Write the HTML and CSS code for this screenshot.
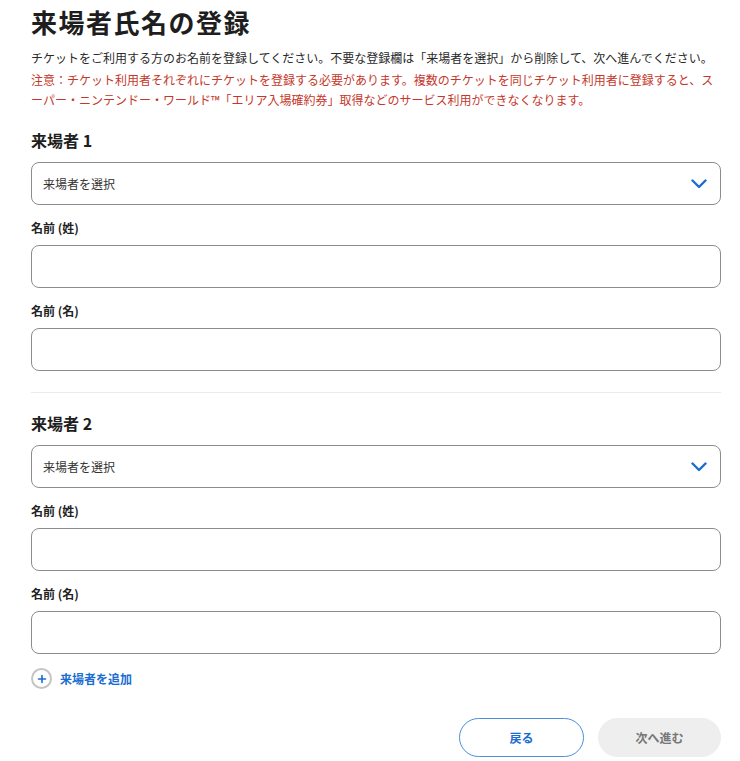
FILE: index.html
```html
<!DOCTYPE html>
<html lang="ja">
<head>
<meta charset="utf-8">
<title>来場者氏名の登録</title>
<link rel="stylesheet" href="styles.css">
</head>
<body>
<main class="page">
  <h1 class="title">来場者氏名の登録</h1>
  <p class="lead">チケットをご利用する方のお名前を登録してください。不要な登録欄は「来場者を選択」から削除して、次へ進んでください。</p>
  <p class="notice">注意：チケット利用者それぞれにチケットを登録する必要があります。複数のチケットを同じチケット利用者に登録すると、スーパー・ニンテンドー・ワールド™「エリア入場確約券」取得などのサービス利用ができなくなります。</p>

  <section class="visitor">
    <h2 class="visitor-title">来場者 1</h2>
    <div class="select">
      <span class="select-text">来場者を選択</span>
      <svg class="chevron" width="16" height="10" viewBox="0 0 16 10"><path d="M1.5 1.5 L8 8 L14.5 1.5" fill="none" stroke="#1a6dd0" stroke-width="2.4" stroke-linecap="round" stroke-linejoin="round"/></svg>
    </div>
    <div class="field">
      <label class="label">名前 (姓)</label>
      <div class="input"></div>
    </div>
    <div class="field">
      <label class="label">名前 (名)</label>
      <div class="input"></div>
    </div>
  </section>

  <hr class="divider">

  <section class="visitor">
    <h2 class="visitor-title">来場者 2</h2>
    <div class="select">
      <span class="select-text">来場者を選択</span>
      <svg class="chevron" width="16" height="10" viewBox="0 0 16 10"><path d="M1.5 1.5 L8 8 L14.5 1.5" fill="none" stroke="#1a6dd0" stroke-width="2.4" stroke-linecap="round" stroke-linejoin="round"/></svg>
    </div>
    <div class="field">
      <label class="label">名前 (姓)</label>
      <div class="input"></div>
    </div>
    <div class="field">
      <label class="label">名前 (名)</label>
      <div class="input"></div>
    </div>
  </section>

  <div class="add">
    <span class="add-icon">
      <svg width="10" height="10" viewBox="0 0 10 10"><path d="M5 1.5 V8.5 M1.5 5 H8.5" stroke="#1a6dd0" stroke-width="1.6" stroke-linecap="round"/></svg>
    </span>
    <span class="add-text">来場者を追加</span>
  </div>

  <div class="actions">
    <button class="btn btn-back">戻る</button>
    <button class="btn btn-next">次へ進む</button>
  </div>
</main>
</body>
</html>
```

FILE: styles.css
```css
* { box-sizing: border-box; }
html, body { margin: 0; padding: 0; background: #fff; }
body {
  font-family: "Noto Sans CJK JP", "Noto Sans", sans-serif;
  color: #222;
}
.page {
  padding: 4px 19px 0 31px;
  width: 740px;
}
.title {
  margin: 0;
  font-size: 26px;
  line-height: 36px;
  font-weight: 700;
  letter-spacing: 1.5px;
  color: #1e1e1e;
}
.lead, .notice {
  margin: 0;
  font-size: 12px;
  line-height: 20px;
  letter-spacing: 0;
}
.lead { margin-top: 8px; color: #2a2a2a; }
.notice { margin-top: 2px; color: #c5372b; }
.visitor-title {
  margin: 0 0 10px;
  font-size: 16px;
  line-height: 24px;
  font-weight: 700;
  color: #1e1e1e;
}
.notice + .visitor { margin-top: 18px; }
.select {
  height: 43px;
  border: 1px solid #8c8c8c;
  border-radius: 8px;
  display: flex;
  align-items: center;
  justify-content: space-between;
  padding: 0 13px 0 11px;
}
.select-text { font-size: 12px; color: #333; }
.chevron { display: block; }
.field { margin-top: 14px; display: flex; flex-direction: column; }
.label {
  font-size: 12px;
  line-height: 18px;
  font-weight: 700;
  color: #222;
  margin-bottom: 8px;
}
.input {
  height: 43px;
  border: 1px solid #8c8c8c;
  border-radius: 8px;
}
.divider {
  margin: 21px 0 18px;
  border: 0;
  border-top: 1px solid #ebebeb;
  height: 0;
}
.add {
  margin-top: 14px;
  display: flex;
  align-items: center;
  gap: 8px;
}
.add-icon {
  width: 21px;
  height: 21px;
  border: 2px solid #c4c4c4;
  border-radius: 50%;
  display: flex;
  align-items: center;
  justify-content: center;
}
.add-icon svg { display: block; }
.add-text {
  font-size: 12px;
  font-weight: 700;
  color: #1a6dd0;
}
.actions {
  margin-top: 29px;
  display: flex;
  justify-content: flex-end;
  gap: 14px;
}
.btn {
  height: 39px;
  border-radius: 20px;
  font-family: inherit;
  font-size: 12px;
  font-weight: 700;
  padding: 0;
}
.btn-back {
  width: 125px;
  background: #fff;
  border: 1px solid #4a8fdb;
  color: #1a6dd0;
}
.btn-next {
  width: 123px;
  background: #eeeeee;
  border: 1px solid #eeeeee;
  color: #777;
}
```
